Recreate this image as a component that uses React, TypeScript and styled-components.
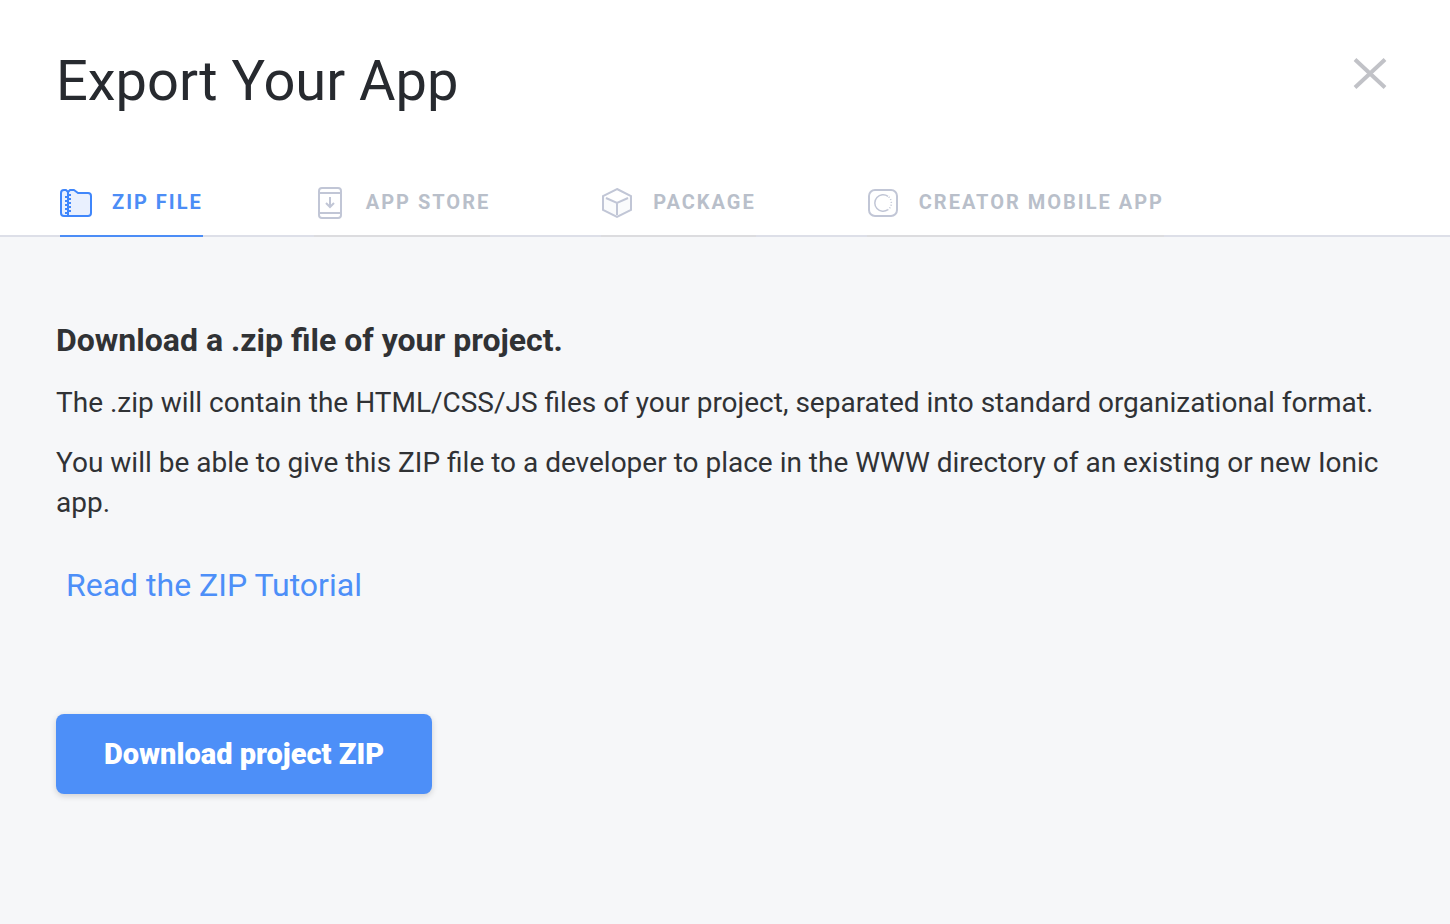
import React, { useState } from "react";
import styled, { createGlobalStyle } from "styled-components";

const GlobalStyle = createGlobalStyle`
  *, *::before, *::after { box-sizing: border-box; }
  body {
    margin: 0;
    background: #f6f7f9;
    color: #303235;
    font-family: Roboto, "Liberation Sans", sans-serif;
  }
`;

const Dialog = styled.main`
  min-height: 100vh;
  background: #f6f7f9;
`;

const Header = styled.header`
  background: #fff;
  border-bottom: 2px solid #dddfe8;
`;

const TitleRow = styled.div`
  display: flex;
  justify-content: space-between;
  align-items: flex-start;
  padding: 48px 60px 0 56px;
`;

const Title = styled.h1`
  margin: 0;
  font-size: 56px;
  line-height: 66px;
  font-weight: 400;
  color: #272a2f;
`;

const CloseButton = styled.button`
  display: flex;
  margin: 6px 0 0;
  padding: 0;
  border: 0;
  background: none;
  color: #c1c2c7;
  cursor: pointer;
`;

const Tabs = styled.nav`
  display: flex;
  gap: 111px;
  margin: 54px 0 -2px;
  padding: 0 60px;
`;

const Tab = styled.button<{ $active: boolean }>`
  display: flex;
  align-items: center;
  gap: 20px;
  height: 69px;
  padding: 0;
  border: 0;
  border-bottom: 2px solid ${(p) => (p.$active ? "#4c8df6" : "#dcdcdf")};
  background: none;
  color: ${(p) => (p.$active ? "#4c8df6" : "#b9bfca")};
  font: 700 20px/24px Roboto, "Liberation Sans", sans-serif;
  letter-spacing: 2px;
  text-transform: uppercase;
  white-space: nowrap;
  cursor: pointer;
`;

const TabIcon = styled.svg.attrs({ viewBox: "0 0 32 32", "aria-hidden": true })<{ $active?: boolean }>`
  flex: none;
  width: 32px;
  height: 32px;
  margin-top: 2px;
  fill: none;
  stroke: ${(p) => (p.$active ? "#3f86fb" : "#c1c6d6")};
  stroke-width: 2;
`;

const Content = styled.section`
  padding: 80px 56px;
`;

const Heading = styled.h2`
  margin: 0 0 20px;
  font-size: 32px;
  line-height: 46px;
  font-weight: 700;
`;

const Paragraph = styled.p`
  margin: 0 0 20px;
  font-size: 28px;
  line-height: 40px;
`;

const TutorialLink = styled.a`
  display: table;
  margin: 40px 0 0 10px;
  color: #4d8ff8;
  font-size: 32px;
  line-height: 44px;
  text-decoration: none;
`;

const DownloadButton = styled.button`
  margin-top: 107px;
  padding: 0 48px;
  height: 80px;
  border: 0;
  border-radius: 8px;
  background: #4d8ff8;
  box-shadow: 0 2px 6px rgba(0, 0, 0, 0.16);
  color: #fff;
  font: 900 29px/40px Roboto, "Liberation Sans", sans-serif;
  cursor: pointer;
`;

type IconProps = { $active: boolean };

const ZipIcon = (p: IconProps) => (
  <TabIcon {...p}>
    <path
      d="M8 5L6 3H4a3 3 0 0 0-3 3v20a3 3 0 0 0 3 3h24a3 3 0 0 0 3-3V9a3 3 0 0 0-3-3H18l-4-3h-4L8 5z"
      fill="#e9f0fe"
      strokeLinejoin="round"
    />
    <path d="M8 5v24M8 8h3M8 12h3M8 16h3M8 20h3M8 24h3M5 10h3M5 14h3M5 18h3M5 22h3M5 26h3" />
  </TabIcon>
);

const StoreIcon = (p: IconProps) => (
  <TabIcon {...p}>
    <rect x="5" y="1" width="22" height="30" rx="3" />
    <path d="M5 6h22M5 26h22M16 10v10M12 16l4 4 4-4" />
  </TabIcon>
);

const PackageIcon = (p: IconProps) => (
  <TabIcon {...p}>
    <path d="M2 9l14 7 14-7v14l-14 7-14-7z" fill="#fafbfc" stroke="none" />
    <path d="M16 2l14 7v14l-14 7-14-7V9z" />
    <path d="M5 11l11 5 11-5M16 16v12" />
  </TabIcon>
);

const CreatorIcon = (p: IconProps) => (
  <TabIcon {...p}>
    <rect x="2" y="3" width="28" height="26" rx="6" />
    <g strokeWidth="1.5">
      <path d="M21 9.3A8.3 8.3 0 1 0 21 22.7" />
      <path d="M21 9.3A8.3 8.3 0 0 1 21 22.7" strokeDasharray="1 1.8" strokeDashoffset="-1" />
    </g>
  </TabIcon>
);

const tabs = [
  { name: "Zip file", Icon: ZipIcon },
  { name: "App store", Icon: StoreIcon },
  { name: "Package", Icon: PackageIcon },
  { name: "Creator mobile app", Icon: CreatorIcon },
];

export default function App() {
  const [active, setActive] = useState(0);
  return (
    <Dialog>
      <GlobalStyle />
      <Header>
        <TitleRow>
          <Title>Export Your App</Title>
          <CloseButton aria-label="Close">
            <svg width="40" height="40" viewBox="0 0 40 40" fill="none" stroke="currentColor" strokeWidth="4" aria-hidden="true">
              <path d="M5 5.5l30 28M35 5.5L5 33.5" />
            </svg>
          </CloseButton>
        </TitleRow>
        <Tabs>
          {tabs.map(({ name, Icon }, i) => (
            <Tab key={name} $active={i === active} onClick={() => setActive(i)}>
              <Icon $active={i === active} />
              <span>{name}</span>
            </Tab>
          ))}
        </Tabs>
      </Header>
      <Content>
        <Heading>Download a .zip file of your project.</Heading>
        <Paragraph>The .zip will contain the HTML/CSS/JS files of your project, separated into standard organizational format.</Paragraph>
        <Paragraph>You will be able to give this ZIP file to a developer to place in the WWW directory of an existing or new Ionic app.</Paragraph>
        <TutorialLink href="#tutorial">Read the ZIP Tutorial</TutorialLink>
        <DownloadButton>Download project ZIP</DownloadButton>
      </Content>
    </Dialog>
  );
}
